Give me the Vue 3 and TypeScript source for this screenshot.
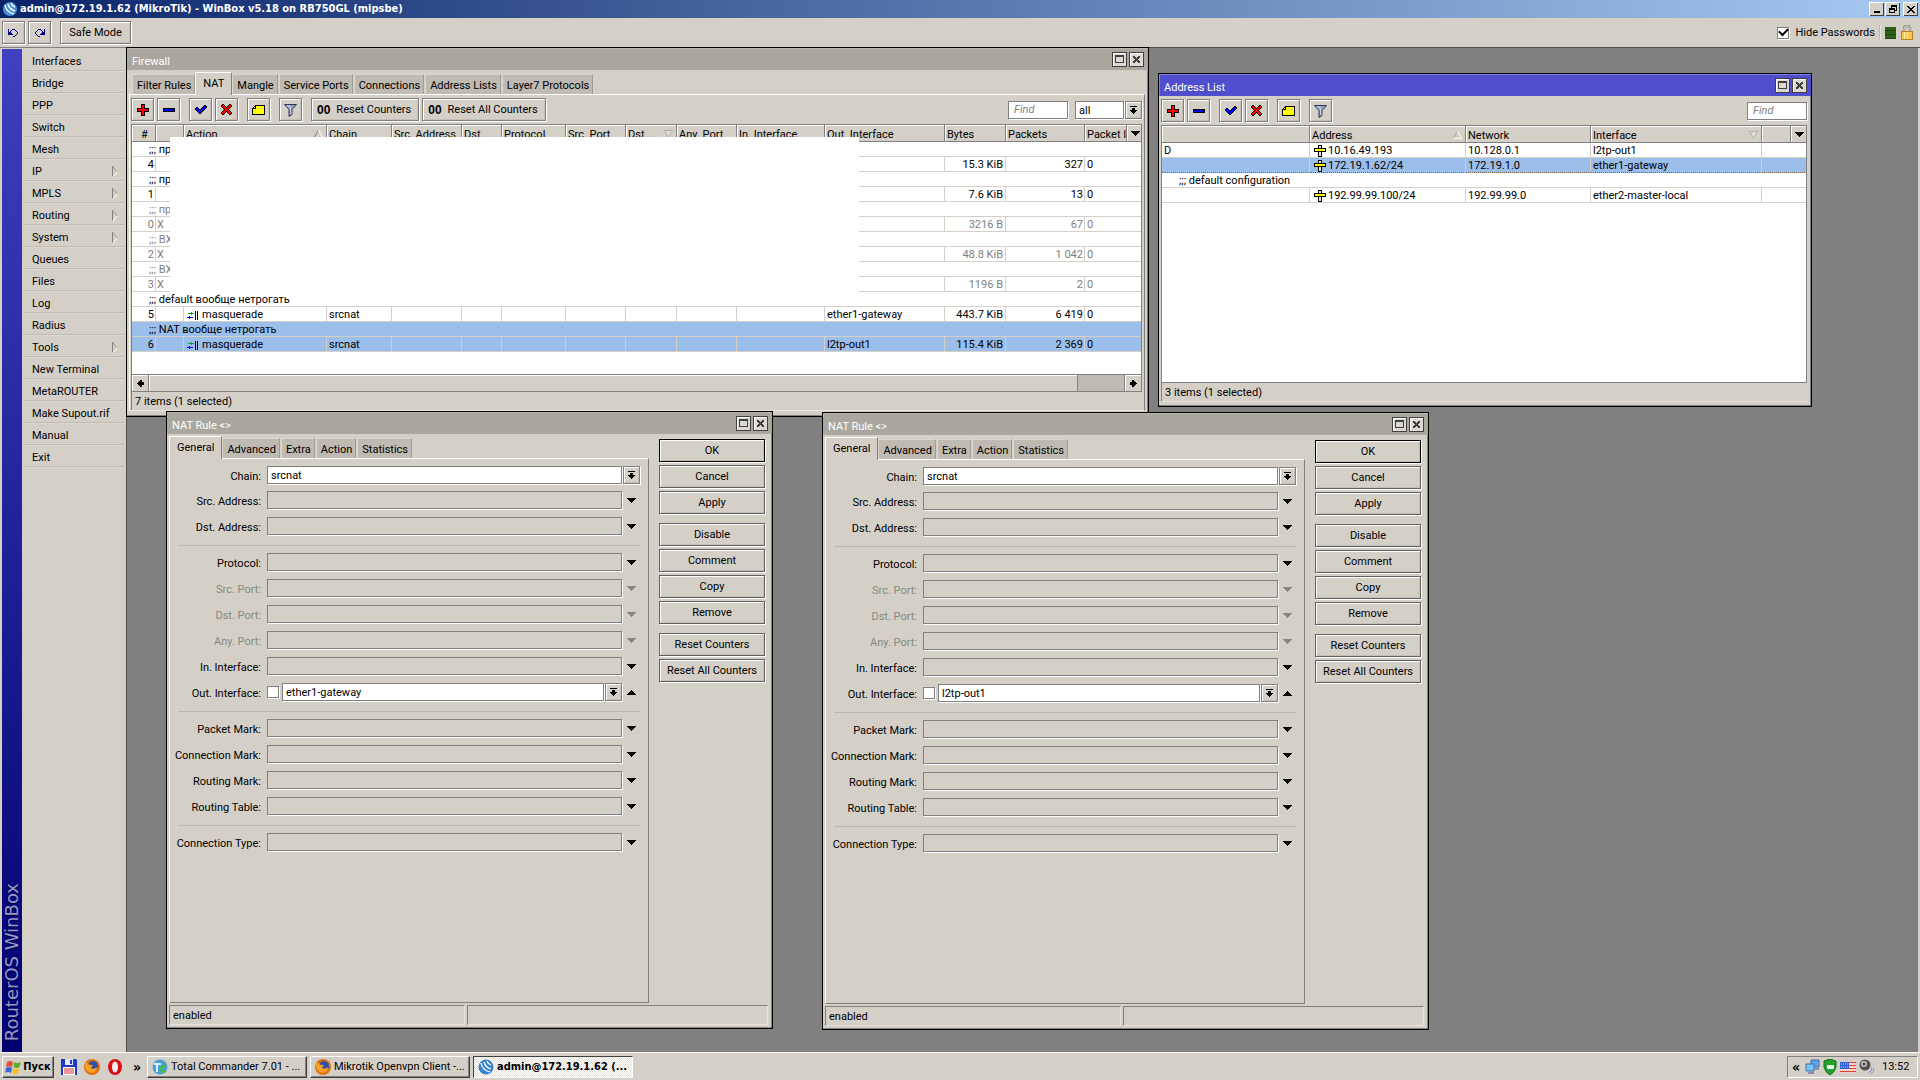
<script setup lang="ts">
import { h, ref } from 'vue'
import type { FunctionalComponent } from 'vue'

const palette: Record<string, string> = {
  k: '#000000', r: '#ff0000', b: '#0000ff', n: '#00007c', y: '#ffff00',
  l: '#c8c890', g: '#00a030', w: '#e8e8d8', d: '#404040',
}

const art: Record<string, string[]> = {
  undo: ['n...nnn....', 'n..n...n...', 'n.n.....n..', 'nnn......n.', 'nnnn.....n.', 'nnnnn...n..', '.......n...', '.....nn....'],
  redo: ['....nnn...n', '...n...n..n', '..n.....n.n', '.n......nnn', '.n.....nnnn', '..n...nnnnn', '...n.......', '....nn.....'],
  plus: ['....kkkk....', '....krrk....', '....krrk....', '....krrk....', 'kkkkkrrkkkkk', 'krrrrrrrrrrk', 'krrrrrrrrrrk', 'kkkkkrrkkkkk', '....krrk....', '....krrk....', '....krrk....', '....kkkk....'],
  minus: ['kkkkkkkkkkkk', 'kbbbbbbbbbbk', 'kbbbbbbbbbbk', 'kkkkkkkkkkkk'],
  check: ['.........kk.', '........kbbk', '.kk....kbbbk', 'kbbk..kbbbk.', 'kbbbkkbbbk..', '.kbbbbbbk...', '..kbbbbk....', '...kbbk.....', '....kk......'],
  cross: ['.kk.....kk.', 'krrk...krrk', 'krrrk.krrrk', '.krrrkrrrk.', '..krrrrrk..', '...krrrk...', '..krrrrrk..', '.krrrkrrrk.', 'krrrk.krrrk', 'krrk...krrk', '.kk.....kk.'],
  note: ['...kkkkkkkkkk', '..kkyyyyyyyyk', '.kykyyyyyyyyk', 'kkkkyllylllyk', 'kyyyyyyyyyyyk', 'kyyyyyyyyyyyk', 'kyyyyyyyyyyyk', 'kyyyyyyyyyyyk', 'kyyyyyyyyyyyk', 'kkkkkkkkkkkkk'],
  masq: ['........k.k', '....g...k.k', '.gggggg.k.k', '....g...k.k', '........k.k', '..b.....k.k', 'bbbbbb..k.k', '..b.....k.k', '........k.k'],
  addr: ['....kkkk....', '....kwwk....', '....kwwk....', 'kkkkkkkkkkkk', 'kyyyyyyyyyyk', 'kyyyyyyyyyyk', 'kkkkkkkkkkkk', '....kwwk....', '....kwwk....', '....kwwk....', '....kwwk....', '....kkkk....'],
  close: ['dd...dd', 'ddd.ddd', '.ddddd.', '..ddd..', '.ddddd.', 'ddd.ddd', 'dd...dd'],
  max: ['ddddddddd', 'ddddddddd', 'd.......d', 'd.......d', 'd.......d', 'd.......d', 'd.......d', 'ddddddddd'],
  drop: ['kkkkkkk', '.......', '..kkk..', '..kkk..', 'kkkkkkk', '.kkkkk.', '..kkk..', '...k...'],
  down: ['kkkkkkkkk', '.kkkkkkk.', '..kkkkk..', '...kkk...', '....k....'],
  up: ['....k....', '...kkk...', '..kkkkk..', '.kkkkkkk.', 'kkkkkkkkk'],
  left: ['...kk..', '..kkk..', '.kkkkkk', 'kkkkkkk', '.kkkkkk', '..kkk..', '...kk..'],
  right: ['..kk...', '..kkk..', 'kkkkkk.', 'kkkkkkk', 'kkkkkk.', '..kkk..', '..kk...'],
  osmin: ['kkkkkk', 'kkkkkk'],
  osrestore: ['..kkkkkk', '..kkkkkk', '..k....k', 'kkkkkk.k', 'kkkkkk.k', 'k....kkk', 'k....k..', 'kkkkkk..'],
  osclose: ['kk....kk', '.kk..kk.', '..kkkk..', '...kk...', '..kkkk..', '.kk..kk.', 'kk....kk'],
}

const Px: FunctionalComponent<{ name: string; tint?: string }> = (props) => {
  const rows = art[props.name]
  const cells = rows.flatMap((row, y) =>
    [...row].flatMap((c, x) =>
      c === '.' ? [] : [h('rect', { x, y, width: 1, height: 1, fill: props.tint ?? palette[c] })]))
  return h('svg', {
    width: rows[0].length, height: rows.length, 'shape-rendering': 'crispEdges', 'aria-hidden': 'true',
    style: { display: 'block', flex: 'none' },
  }, cells)
}
Px.props = ['name', 'tint']

const hidePasswords = ref(true)
const menu = ['Interfaces', 'Bridge', 'PPP', 'Switch', 'Mesh', 'IP', 'MPLS', 'Routing', 'System', 'Queues', 'Files', 'Log', 'Radius', 'Tools', 'New Terminal', 'MetaROUTER', 'Make Supout.rif', 'Manual', 'Exit']
const submenus = ['IP', 'MPLS', 'Routing', 'System', 'Tools']

const firewallTabs = ['Filter Rules', 'NAT', 'Mangle', 'Service Ports', 'Connections', 'Address Lists', 'Layer7 Protocols']
const natCols = [24, 28, 143, 65, 70, 40, 64, 60, 51, 60, 88, 120, 61, 79, 42, 16]
const natHeads = ['#', '', 'Action', 'Chain', 'Src. Address', 'Dst....', 'Protocol', 'Src. Port', 'Dst....', 'Any. Port', 'In. Interface', 'Out. Interface', 'Bytes', 'Packets', 'Packet I']

interface NatRow {
  n: number; flag: string; note: string; out: string; bytes: string; packets: string
  full?: boolean; off?: boolean; sel?: boolean
}
const natRows: NatRow[] = [
  { n: 4, flag: '', note: 'пр', out: '', bytes: '15.3 KiB', packets: '327' },
  { n: 1, flag: '', note: 'пр', out: '', bytes: '7.6 KiB', packets: '13' },
  { n: 0, flag: 'X', note: 'пр', out: '', bytes: '3216 B', packets: '67', off: true },
  { n: 2, flag: 'X', note: 'ВХ', out: '', bytes: '48.8 KiB', packets: '1 042', off: true },
  { n: 3, flag: 'X', note: 'ВХ', out: '', bytes: '1196 B', packets: '2', off: true },
  { n: 5, flag: '', note: 'default вообще нетрогать', out: 'ether1-gateway', bytes: '443.7 KiB', packets: '6 419', full: true },
  { n: 6, flag: '', note: 'NAT вообще нетрогать', out: 'l2tp-out1', bytes: '115.4 KiB', packets: '2 369', full: true, sel: true },
]

const addrCols = [148, 156, 125, 171, 29, 16]
const addresses = [
  { flag: 'D', note: '', address: '10.16.49.193', network: '10.128.0.1', iface: 'l2tp-out1', sel: false },
  { flag: '', note: '', address: '172.19.1.62/24', network: '172.19.1.0', iface: 'ether1-gateway', sel: true },
  { flag: '', note: 'default configuration', address: '192.99.99.100/24', network: '192.99.99.0', iface: 'ether2-master-local', sel: false },
]

const rules = [
  { id: 'rule-a', out: 'ether1-gateway' },
  { id: 'rule-b', out: 'l2tp-out1' },
]
const ruleTabs = ['General', 'Advanced', 'Extra', 'Action', 'Statistics']
const fieldGroups = [
  ['Chain', 'Src. Address', 'Dst. Address'],
  ['Protocol', 'Src. Port', 'Dst. Port', 'Any. Port', 'In. Interface', 'Out. Interface'],
  ['Packet Mark', 'Connection Mark', 'Routing Mark', 'Routing Table'],
  ['Connection Type'],
]
const actions = [
  ['OK', 'Cancel', 'Apply'],
  ['Disable', 'Comment', 'Copy', 'Remove'],
  ['Reset Counters', 'Reset All Counters'],
]
const isOff = (f: string) => f.endsWith('Port')
const tools = [['plus', 'minus'], ['check', 'cross'], ['note'], ['filter']]
</script>

<template>
  <div class="desktop">
    <header class="os-title">
      <svg width="16" height="16" viewBox="0 0 16 16"><circle cx="8" cy="8" r="7" fill="#4a90d8" /><path d="M3 4q1 7 9 9M6 3q1 5 7 7M9 2q1 3 4 4" stroke="#fff" stroke-width="1.4" fill="none" /></svg>
      <h1>admin@172.19.1.62 (MikroTik) - WinBox v5.18 on RB750GL (mipsbe)</h1>
      <div class="os-btns">
        <button aria-label="Minimize" class="low"><Px name="osmin" /></button>
        <button aria-label="Restore"><Px name="osrestore" /></button>
        <button aria-label="Close" class="apart"><Px name="osclose" /></button>
      </div>
    </header>

    <div class="topbar">
      <button class="btn tool" aria-label="Undo"><Px name="undo" /></button>
      <button class="btn tool" aria-label="Redo"><Px name="redo" /></button>
      <button class="btn safe">Safe Mode</button>
      <div class="topbar-right">
        <input id="hidepw" v-model="hidePasswords" type="checkbox" class="tick">
        <label for="hidepw">Hide Passwords</label>
        <i class="divider" />
        <i class="load" />
        <svg width="14" height="15" viewBox="0 0 14 15"><path d="M4 7V4q0-3 3-3t3 3v3" fill="none" stroke="#8a8a80" stroke-width="2.4" /><path d="M4 7V4q0-3 3-3t3 3v3" fill="none" stroke="#d8d8d0" stroke-width="1" /><rect x="1.500" y="6.500" width="11" height="8" fill="#f8c850" stroke="#b88020" /><path d="M4.500 7v7M7.500 7v7" stroke="#ffe8a0" /></svg>
      </div>
    </div>

    <div class="work">
      <nav class="side">
        <div class="strip"><span>RouterOS WinBox</span></div>
        <ul>
          <li v-for="m in menu" :key="m">
            <button>{{ m }}
              <svg v-if="submenus.includes(m)" width="6" height="12" viewBox="0 0 6 12"><path d="M.5 0v11" stroke="#808080" /><path d="M.5 0L5 6" stroke="#a09c94" fill="none" /><path d="M5 6L.5 11.500" stroke="#fff" fill="none" /></svg>
            </button>
          </li>
        </ul>
      </nav>

      <main class="mdi">
        <section class="win firewall">
          <div class="win-title"><h2>Firewall</h2><button aria-label="Maximize"><Px name="max" /></button><button aria-label="Close"><Px name="close" /></button></div>
          <div class="win-body">
            <div class="tabs"><button v-for="t in firewallTabs" :key="t" class="tab" :class="{ on: t === 'NAT' }">{{ t }}</button></div>
            <div class="panel list-panel">
              <div class="tools">
                <div v-for="g in tools" :key="g[0]" class="tool-group">
                  <button v-for="t in g" :key="t" class="btn tool" :aria-label="t">
                    <svg v-if="t === 'filter'" width="13" height="14" viewBox="0 0 13 14"><path d="M.5 1.500h12l-4.500 5v5l-3 2v-7z" fill="#90a0c8" stroke="#303848" /><path d="M3 3h3l1 8" fill="none" stroke="#d0d8f0" /></svg>
                    <Px v-else :name="t" />
                  </button>
                </div>
                <button class="btn counter"><b>00</b>Reset Counters</button>
                <button class="btn counter"><b>00</b>Reset All Counters</button>
                <div class="find">
                  <input type="text" placeholder="Find" aria-label="Find" class="field search">
                  <div class="filter">
                    <select class="field" aria-label="Chain filter"><option>all</option></select>
                    <button class="btn drop" aria-label="Open list"><Px name="drop" /></button>
                  </div>
                </div>
              </div>
              <div class="grid-box">
                <table>
                  <colgroup><col v-for="(w, i) in natCols" :key="i" :style="{ width: w + 'px' }"></colgroup>
                  <thead><tr>
                    <th v-for="(c, i) in natHeads" :key="i" :class="{ mid: i === 0 }">{{ c }}
                      <svg v-if="i === 2" class="sort" width="9" height="8" viewBox="0 0 9 8"><path d="M0 7.500L4.500 0" stroke="#808080" /><path d="M4.500 0L8.500 7.500H0" stroke="#fff" fill="none" /></svg>
                      <svg v-if="i === 8" class="sort" width="9" height="8" viewBox="0 0 9 8"><path d="M8.500 .5L4.500 7.500L.5 .5z" stroke="#b4b0a8" fill="#e0dcd4" /></svg>
                    </th>
                    <th class="pick"><button aria-label="Choose columns"><Px name="down" /></button></th>
                  </tr></thead>
                  <tbody>
                    <template v-for="r in natRows" :key="r.n">
                      <tr :class="{ off: r.off, sel: r.sel }"><td colspan="16" class="note">;;; {{ r.note }}</td></tr>
                      <tr :class="{ off: r.off, sel: r.sel }">
                        <td class="num">{{ r.n }}</td><td class="flag">{{ r.flag }}</td>
                        <td><span v-if="r.full" class="with-icon act"><Px name="masq" />masquerade</span></td>
                        <td>{{ r.full ? 'srcnat' : '' }}</td>
                        <td v-for="k in 7" :key="k" />
                        <td>{{ r.out }}</td><td class="num byte">{{ r.bytes }}</td><td class="num">{{ r.packets }}</td><td colspan="2" class="end">0</td>
                      </tr>
                    </template>
                  </tbody>
                </table>
                <div class="blank-area" />
                <div class="scroll">
                  <button aria-label="Scroll left"><Px name="left" /></button>
                  <div class="thumb" />
                  <div class="trough" />
                  <button aria-label="Scroll right"><Px name="right" /></button>
                </div>
              </div>
              <p class="count">7 items (1 selected)</p>
            </div>
          </div>
        </section>

        <section class="win addresses">
          <div class="win-title active"><h2>Address List</h2><button aria-label="Maximize"><Px name="max" /></button><button aria-label="Close"><Px name="close" /></button></div>
          <div class="win-body">
            <div class="tools">
              <div v-for="g in tools" :key="g[0]" class="tool-group">
                <button v-for="t in g" :key="t" class="btn tool" :aria-label="t">
                  <svg v-if="t === 'filter'" width="13" height="14" viewBox="0 0 13 14"><path d="M.5 1.500h12l-4.500 5v5l-3 2v-7z" fill="#90a0c8" stroke="#303848" /><path d="M3 3h3l1 8" fill="none" stroke="#d0d8f0" /></svg>
                  <Px v-else :name="t" />
                </button>
              </div>
              <div class="find"><input type="text" placeholder="Find" aria-label="Find" class="field search"></div>
            </div>
            <div class="grid-box">
              <table>
                <colgroup><col v-for="(w, i) in addrCols" :key="i" :style="{ width: w + 'px' }"></colgroup>
                <thead><tr>
                  <th />
                  <th>Address<svg class="sort" width="9" height="8" viewBox="0 0 9 8"><path d="M0 7.500L4.500 0" stroke="#a8a49c" /><path d="M4.500 0L8.500 7.500H0" stroke="#fff" fill="none" /></svg></th>
                  <th>Network</th>
                  <th>Interface<svg class="sort" width="9" height="8" viewBox="0 0 9 8"><path d="M8.500 .5L4.500 7.500L.5 .5z" stroke="#b4b0a8" fill="#e0dcd4" /></svg></th>
                  <th />
                  <th class="pick"><button aria-label="Choose columns"><Px name="down" /></button></th>
                </tr></thead>
                <tbody>
                  <template v-for="a in addresses" :key="a.address">
                    <tr v-if="a.note"><td colspan="6" class="note">;;; {{ a.note }}</td></tr>
                    <tr :class="{ sel: a.sel, focus: a.sel }">
                      <td>{{ a.flag }}</td>
                      <td><span class="with-icon"><Px name="addr" />{{ a.address }}</span></td>
                      <td>{{ a.network }}</td><td>{{ a.iface }}</td><td colspan="2" class="end" />
                    </tr>
                  </template>
                </tbody>
              </table>
            </div>
            <p class="count">3 items (1 selected)</p>
          </div>
        </section>

        <section v-for="r in rules" :key="r.id" class="win rule" :class="r.id">
          <div class="win-title"><h2>NAT Rule &lt;&gt;</h2><button aria-label="Maximize"><Px name="max" /></button><button aria-label="Close"><Px name="close" /></button></div>
          <div class="win-body">
            <div class="rule-main">
              <div class="rule-left">
                <div class="tabs"><button v-for="t in ruleTabs" :key="t" class="tab" :class="{ on: t === 'General' }">{{ t }}</button></div>
                <form class="panel form" @submit.prevent>
                  <fieldset v-for="g in fieldGroups" :key="g[0]">
                    <div v-for="f in g" :key="f" class="row" :class="{ off: isOff(f), lead: f === 'Chain' }">
                      <label :for="r.id + f">{{ f }}:</label>
                      <template v-if="f === 'Chain'">
                        <select :id="r.id + f" class="field"><option>srcnat</option></select>
                        <button type="button" class="btn drop" aria-label="Open list"><Px name="drop" /></button>
                      </template>
                      <template v-else-if="f === 'Out. Interface'">
                        <input type="checkbox" class="tick" aria-label="Not">
                        <select :id="r.id + f" class="field"><option>{{ r.out }}</option></select>
                        <button type="button" class="btn drop" aria-label="Open list"><Px name="drop" /></button>
                        <button type="button" class="fold" aria-label="Collapse"><Px name="up" /></button>
                      </template>
                      <template v-else>
                        <input :id="r.id + f" type="text" class="field empty" :disabled="isOff(f)">
                        <button type="button" class="fold" aria-label="Expand"><Px name="down" :tint="isOff(f) ? '#868a7e' : undefined" /></button>
                      </template>
                    </div>
                  </fieldset>
                </form>
              </div>
              <div class="actions">
                <div v-for="g in actions" :key="g[0]" class="action-group">
                  <button v-for="a in g" :key="a" class="btn" :class="{ main: a === 'OK' }">{{ a }}</button>
                </div>
              </div>
            </div>
            <div class="status"><p>enabled</p><p /></div>
          </div>
        </section>
      </main>
    </div>

    <footer class="taskbar">
      <button class="raised start">
        <svg width="17" height="16" viewBox="0 0 17 16"><path d="M2 3q3-2 6 0L7 8q-3-1-6 0z" fill="#e8502c" /><path d="M9 3q3 2 7 0l-1.500 5q-3 2-6 0z" fill="#58b030" /><path d="M1 9q3-2 6 0l-1 5q-3-2-6 0z" fill="#3868d8" /><path d="M8 9q3 2 6 0l-1 5q-3 2-6 0z" fill="#f8c020" /></svg>Пуск
      </button>
      <div class="quick">
        <svg width="16" height="16" viewBox="0 0 16 16"><path d="M0 0h15l1 1v15H0z" fill="#2038c8" /><path d="M4 0h8v6H4z" fill="#e8e8f0" /><path d="M9 1h2v4H9z" fill="#2038c8" /><path d="M2 8h12v8H2z" fill="#fff" /><path d="M3 10h10M3 12h10M3 14h10" stroke="#d83030" /></svg>
        <svg width="16" height="16" viewBox="0 0 16 16"><circle cx="8" cy="8" r="8" fill="#e07010" /><circle cx="9" cy="7" r="5" fill="#3050a8" /><path d="M1 4q3-1 4 2 3-1 4 1-2 0-2 2 3 2 6-1 0 5-5 6-6-1-7-6z" fill="#f8a020" /></svg>
        <svg width="16" height="16" viewBox="0 0 16 16"><ellipse cx="8" cy="8" rx="7" ry="8" fill="#d81018" /><ellipse cx="8" cy="8" rx="3" ry="5.500" fill="#f4f0ec" /></svg>
      </div>
      <span class="chev">»</span>
      <div class="tasks">
        <button class="raised task"><svg width="16" height="16" viewBox="0 0 16 16"><circle cx="8" cy="8" r="7.500" fill="#48a0d8" /><path d="M2 4h7v2H6v7H4V6H2z" fill="#d8f0ff" /><path d="M14 8q-5-2-5 2t5 2" stroke="#48c030" stroke-width="2" fill="none" /></svg><span>Total Commander 7.01 - ...</span></button>
        <button class="raised task"><svg width="16" height="16" viewBox="0 0 16 16"><circle cx="8" cy="8" r="8" fill="#e07010" /><circle cx="9" cy="7" r="5" fill="#3050a8" /><path d="M1 4q3-1 4 2 3-1 4 1-2 0-2 2 3 2 6-1 0 5-5 6-6-1-7-6z" fill="#f8a020" /></svg><span>Mikrotik Openvpn Client -...</span></button>
        <button class="raised task pressed"><svg width="16" height="16" viewBox="0 0 16 16"><circle cx="8" cy="8" r="7.500" fill="#3880d0" /><path d="M3 4q1 7 9 9M6 3q1 5 7 7M9 2q1 3 4 4" stroke="#fff" stroke-width="1.300" fill="none" /></svg><span>admin@172.19.1.62 (...</span></button>
      </div>
      <div class="tray">
        <span class="chev">«</span>
        <svg width="15" height="16" viewBox="0 0 15 16"><path d="M6 1h8v7H6z" fill="#58a8f0" stroke="#5068a0" /><path d="M1 5h8v7H1z" fill="#70c8ff" stroke="#5068a0" /><path d="M3 14h6M9 10h5" stroke="#8890a8" stroke-width="2" /></svg>
        <svg width="14" height="16" viewBox="0 0 14 16"><path d="M7 0l6 2v6q-1 5-6 8-5-3-6-8V2z" fill="#28a030" stroke="#107018" /><rect x="4" y="6" width="7" height="4" rx="1" fill="#e8f8e8" /></svg>
        <svg width="16" height="11" viewBox="0 0 16 11"><path d="M0 0h16v11H0z" fill="#fff" /><path d="M0 .5h16M0 3.500h16M0 6.500h16M0 9.500h16" stroke="#e04038" stroke-width="1.500" /><path d="M0 0h9v7H0z" fill="#3060d8" /><path d="M1 2h7M1 5h7" stroke="#c8d8ff" stroke-dasharray="1 1" /></svg>
        <svg width="16" height="16" viewBox="0 0 16 16"><circle cx="6" cy="6" r="5.500" fill="#505050" /><circle cx="5" cy="5" r="3" fill="#c8c8c8" /><circle cx="5" cy="5" r="1.500" fill="#404040" /><path d="M9 14q4-1 4-6M12 15q3-2 3-6" stroke="#8888e8" fill="none" /></svg>
        <time>13:52</time>
      </div>
    </footer>
  </div>
</template>

<style>
body { margin: 0; background: #d4d0c8; }
</style>

<style scoped>
.desktop {
  --face: #d4d0c8;
  --ui: Roboto, "Liberation Sans", sans-serif;
  display: flex; flex-direction: column; min-height: 100vh; background: var(--face);
  font: 11px/14px var(--ui); color: #000;
}
.desktop * { box-sizing: border-box; }
h1, h2, p, ul { margin: 0; padding: 0; font-weight: normal; font-size: inherit; }
button, input, select { font: inherit; color: inherit; margin: 0; border-radius: 0; }
button { padding: 0; border: 0; background: none; display: flex; align-items: center; justify-content: center; white-space: nowrap; }
svg { flex: none; }

.os-title { height: 18px; display: flex; align-items: center; gap: 2px; padding: 0 2px; background: linear-gradient(90deg, #0a246a, #a6caf0); color: #fff; }
.os-title h1 { flex: 1; font: bold 11px/18px "DejaVu Sans Condensed", "DejaVu Sans", sans-serif; white-space: nowrap; }
.os-btns { display: flex; gap: 1px; }
.os-btns button { width: 15px; height: 14px; background: var(--face); box-shadow: inset 1px 1px #fff, inset -1px -1px #404040; }
.os-btns .low { align-items: flex-end; padding-bottom: 3px; }
.os-btns .apart { margin-left: 2px; }

.topbar { height: 29px; display: flex; align-items: center; padding: 0 6px 0 2px; gap: 3px; }
.btn { height: 23px; background: var(--face); border: 1px solid #808080; box-shadow: 1px 1px #fff, inset 1px 1px #fff, inset -1px -1px #c4c0b8; }
.tool { width: 23px; }
.safe { width: 71px; margin-left: 6px; padding-top: 1px; }
.topbar-right { margin-left: auto; display: flex; align-items: center; gap: 4px; }
.topbar-right .tick { margin-right: 2px; }
.tick { appearance: none; width: 12px; height: 12px; background: #fff; border: 1px solid #808080; box-shadow: 1px 1px #fff; display: grid; place-items: center; }
.tick:checked::before { content: ""; width: 7px; height: 4px; margin-top: -3px; border: solid #000; border-width: 0 0 2px 2px; transform: rotate(-45deg); }
.divider { width: 2px; height: 16px; background: #c0bcb4; border-right: 1px solid #e8e4dc; }
.load { width: 11px; height: 12px; background: repeating-linear-gradient(#306018 0 3px, #204810 3px 4px); }

.work { flex: 1; display: flex; min-height: 0; }
.side { width: 126px; display: flex; gap: 2px; padding: 1px 0 0 2px; border-top: 1px solid #808080; }
.strip { width: 20px; background: linear-gradient(#4040c0, #000070); display: flex; align-items: flex-end; justify-content: center; padding-bottom: 11px; }
.strip span { writing-mode: vertical-rl; transform: rotate(180deg); font: 18px/20px "DejaVu Sans", sans-serif; color: #9898c8; text-shadow: -1px -1px 1px #000040; white-space: nowrap; }
.side ul { width: 100px; list-style: none; }
.side li { height: 22px; border-bottom: 1px solid #c0bcb4; box-shadow: 0 1px #dcd8d0; }
.side li button { width: 100%; height: 21px; padding: 4px 6px 0 8px; justify-content: space-between; }

.mdi { flex: 1; position: relative; min-width: 0; background: #808080; box-shadow: inset 1px 1px #505050, inset -2px 0 #d4d0c8; overflow: hidden; }
.win { position: absolute; display: flex; flex-direction: column; background: var(--face); border: 1px solid #000; box-shadow: inset -1px -1px #808080; }
.firewall { left: 0; top: 0; width: 1023px; height: 370px; }
.addresses { left: 1032px; top: 26px; width: 654px; height: 334px; }
.rule { width: 607px; height: 618px; top: 364px; left: 40px; }
.rule-b { top: 365px; left: 696px; }
.win-title { height: 22px; display: flex; align-items: center; gap: 2px; padding: 0 4px 0 5px; background: #aaa79f; color: #fff; box-shadow: inset 0 1px #b8b5ad; }
.win-title.active { background: #4f4fce; box-shadow: inset 1px 1px #8080e0; }
.win-title h2 { flex: 1; padding-top: 5px; }
.win-title button { width: 15px; height: 15px; background: #dcd8d4; border: 1px solid #404040; box-shadow: inset 1px 1px #fff; }
.win-body { flex: 1; display: flex; flex-direction: column; padding: 2px 3px 3px 2px; min-height: 0; }

.tabs { display: flex; height: 22px; align-items: flex-end; }
.tab { height: 20px; padding: 2px 3px 0 4px; margin-right: 1px; background: #bfbab2; border: solid; border-width: 1px 1px 0; border-color: #dcd8d0 #a09c94 #fff #dcd8d0; }
.tab.on { height: 23px; padding: 0 7px; margin: 0 0 -1px; position: relative; background: var(--face); border-color: #fff #808080 #fff #fff; }
.firewall .tab:first-child { margin: 0 0 0 3px; }
.panel { flex: 1; border: 1px solid; border-color: #fff #808080 #808080 #fff; min-height: 0; }
.list-panel { display: flex; flex-direction: column; padding: 3px 2px 0 1px; border-bottom-color: #e8e4dc; }

.tools { display: flex; gap: 3px; align-items: center; }
.tool-group { display: flex; gap: 3px; margin-right: 6px; }
.counter { padding: 0 7px 0 5px; gap: 6px; }
.counter b { font-family: "Liberation Sans", sans-serif; font-size: 12px; }
.find { margin-left: auto; display: flex; gap: 7px; }
.filter { display: flex; gap: 1px; }
.filter .field { width: 49px; }
.field { appearance: none; height: 18px; min-width: 0; padding: 2px 3px 0; background: #fff; border: 1px solid #808080; box-shadow: 1px 1px #fff; outline: 0; }
.search { width: 60px; padding: 0 5px; }
.search::placeholder { color: #808080; font-style: italic; opacity: 1; }
.drop { width: 17px; height: 18px; }

.grid-box { margin-top: 3px; flex: 1; display: flex; flex-direction: column; background: #fff; border: 1px solid #808080; position: relative; min-height: 0; overflow: hidden; }
table { border-collapse: separate; border-spacing: 0; table-layout: fixed; width: 100%; }
th { height: 17px; padding: 3px 0 0 2px; font-weight: normal; text-align: left; line-height: 13px; background: var(--face); border: solid #808080; border-width: 0 1px 1px 0; box-shadow: inset 1px 1px #fff; white-space: nowrap; overflow: hidden; position: relative; }
th.mid { text-align: center; }
th.pick { border-right: 0; padding: 0; }
th.pick button { width: 100%; height: 16px; }
.sort { position: absolute; right: 3px; top: 5px; }
td { height: 15px; padding: 2px 2px 0; line-height: 12px; border: solid var(--face); border-width: 0 1px 1px 0; white-space: nowrap; overflow: hidden; }
td.note { padding-left: 17px; border-right: 0; }
td.end { border-right: 0; }
td.num { text-align: right; padding-right: 1px; }
td.byte { padding-right: 2px; }
td.flag { padding-left: 1px; }
tr.off { color: #808080; }
tr.sel td { background: #9cbeea; }
tr.focus td { border-bottom: 1px dotted #806848; }
.with-icon { display: flex; align-items: center; gap: 2px; padding-left: 2px; }
.with-icon.act { gap: 4px; padding-left: 1px; }
.blank-area { position: absolute; left: 38px; top: 12px; width: 689px; height: 155px; background: #fff; }
.scroll { margin-top: auto; height: 17px; display: flex; border-top: 1px solid #808080; }
.scroll button { width: 16px; box-shadow: inset 1px 1px #fff; }
.scroll .thumb { flex: 1; border: solid #808080; border-width: 0 1px; box-shadow: inset 1px 1px #fff; }
.scroll .trough { width: 47px; background: #bfbab2; border-right: 1px solid #808080; }
.scroll button, .scroll .thumb { background: var(--face); }
.count { height: 18px; padding: 3px 3px 0; border-left: 1px solid #808080; }
.firewall .win-body { padding-bottom: 5px; }
.addresses .win-body { padding: 3px 4px 4px 2px; }
.addresses .count { height: 19px; border-bottom: 1px solid #e8e4dc; }

.rule .win-body { padding-right: 2px; }
.rule-main { flex: 1; display: flex; gap: 10px; min-height: 0; }
.rule-left { flex: 1; display: flex; flex-direction: column; }
.form { padding: 7px 8px 0 0; }
fieldset { margin: 0; padding: 0; border: 0; min-width: 0; }
fieldset + fieldset::before { content: ""; display: block; height: 1px; margin: 2px 0 7px 8px; background: #bcb8b0; }
.row { display: flex; gap: 1px; height: 18px; margin-bottom: 8px; align-items: center; }
.row.lead { margin-bottom: 7px; }
.row label { width: 91px; margin-right: 5px; padding-top: 3px; text-align: right; white-space: nowrap; }
.row .field { flex: 1; }
.row .tick { margin-right: 2px; }
.row.off { color: #868a7e; }
.field.empty { background: var(--face); }
.fold { width: 17px; height: 18px; }
.actions { width: 106px; margin-right: 5px; padding-top: 3px; display: flex; flex-direction: column; gap: 9px; }
.action-group { display: flex; flex-direction: column; gap: 3px; }
.actions .btn { padding-top: 1px; border-color: #606060; }
.actions .btn.main { border-color: #000; }
.status { display: flex; gap: 2px; height: 20px; margin-top: 2px; padding-right: 2px; }
.status p { flex: 1; padding: 3px; border: 1px solid; border-color: #808080 #e8e4dc #e8e4dc #808080; }
.status p:first-child { flex: 0 0 296px; }

.taskbar { height: 28px; display: flex; align-items: center; padding: 1px 2px 0; border-top: 1px solid #fff; line-height: 16px; }
.raised { height: 22px; background: var(--face); border: 1px solid; border-color: #fff #404040 #404040 #fff; box-shadow: inset -1px -1px #808080; }
.start { width: 52px; font: bold 11px/16px "DejaVu Sans Condensed", "DejaVu Sans", sans-serif; gap: 1px; }
.quick { display: flex; gap: 7px; margin-left: 7px; }
.chev { width: 12px; margin-left: 8px; font: bold 14px/16px "DejaVu Sans Condensed", "DejaVu Sans", sans-serif; text-align: center; }
.tasks { display: flex; gap: 3px; margin-left: 4px; flex: 1; }
.task { width: 160px; padding: 0 4px; gap: 3px; justify-content: flex-start; }
.task span { overflow: hidden; }
.task.pressed { font: bold 11px/16px "DejaVu Sans Condensed", "DejaVu Sans", sans-serif; background: repeating-conic-gradient(#fff 0 25%, #e4e0d8 0 50%) 0 0 / 2px 2px; border-color: #404040 #fff #fff #404040; box-shadow: none; }
.tray { width: 131px; height: 22px; display: flex; align-items: center; gap: 3px; border: 1px solid; border-color: #808080 #fff #fff #808080; }
.tray .chev { margin-left: 2px; }
.tray time { margin-left: 4px; }
</style>
